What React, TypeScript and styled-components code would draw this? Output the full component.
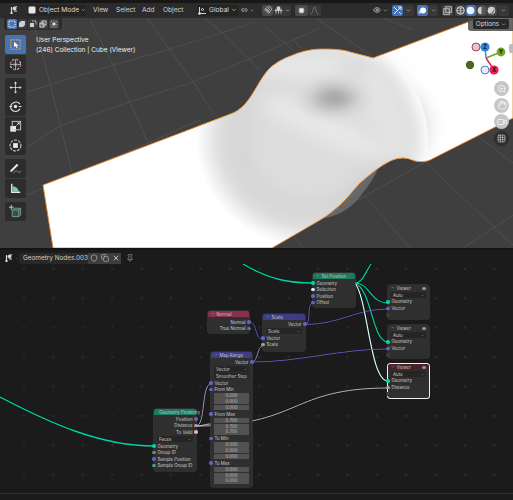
import React from "react";
import styled, { createGlobalStyle } from "styled-components";
import { ChevronDown, Hand, Pin, Shield, Copy, X, Video, ZoomIn, Eye, Magnet, Grid3x3, Link2 } from "lucide-react";

const GlobalStyle = createGlobalStyle`
  html, body { margin: 0; padding: 0; background: #1b1b1b; }
  body { font-family: "Inter", "Liberation Sans", sans-serif; overflow: hidden; }
`;

const Page = styled.div`
  width: 513px;
  height: 500px;
  display: flex;
  flex-direction: column;
  background: #141414;
  overflow: hidden;
`;

/* ---------- 3D viewport ---------- */

const Viewport = styled.section`
  position: relative;
  height: 248px;
  flex: none;
  background: #3f3f3f;
  display: flex;
  flex-direction: column;
  overflow: hidden;
`;

const Scene = styled.svg`
  position: absolute;
  inset: 0;
`;

const TopStrip = styled.div`
  position: relative;
  height: 18px;
  flex: none;
  box-sizing: border-box;
  padding: 4px 4px 2px 8px;
  background: #2b2b2b;
  box-shadow: inset 0 3px 0 #171717;
  display: flex;
  align-items: center;
  color: #d8d8d8;
  font-size: 6.6px;
`;

const Mini = styled.span<{ $w: number; $ml?: number; $bg?: string }>`
  width: ${(p) => p.$w}px;
  height: 11px;
  margin-left: ${(p) => p.$ml ?? 0}px;
  flex: none;
  display: flex;
  align-items: center;
  justify-content: center;
  gap: 2px;
  border-radius: 2px;
  background: ${(p) => p.$bg ?? "transparent"};
  color: #dcdcdc;
  white-space: nowrap;
`;

const MenuItem = styled.span<{ $w: number; $ml?: number }>`
  width: ${(p) => p.$w}px;
  margin-left: ${(p) => p.$ml ?? 0}px;
  flex: none;
  color: #d4d4d4;
`;

const Spring = styled.span`
  flex: 1;
`;

const ToolRow = styled.div`
  position: relative;
  display: flex;
  justify-content: space-between;
  align-items: flex-start;
  height: 13px;
  flex: none;
`;

const SelectModes = styled.div`
  margin-left: 4px;
  width: 58px;
  height: 12px;
  box-sizing: border-box;
  padding: 1px 3px;
  background: #2c2c2c;
  border-radius: 0 0 3px 3px;
  display: flex;
  gap: 1px;
`;

const ModeBtn = styled.span<{ $active?: boolean }>`
  width: 9.5px;
  height: 10px;
  border-radius: 1.5px;
  background: ${(p) => (p.$active ? "#4772b3" : "#3c3c3c")};
  display: flex;
  align-items: center;
  justify-content: center;
`;

const OptionsWrap = styled.div`
  width: 45px;
  height: 13px;
  box-sizing: border-box;
  padding: 1px 4px 1px 5px;
  background: rgba(75, 75, 75, 0.85);
  border-radius: 0 0 0 3px;
`;

const OptionsBtn = styled.div`
  height: 10px;
  border-radius: 2px;
  background: #282828;
  color: #d8d8d8;
  font-size: 6.4px;
  display: flex;
  align-items: center;
  justify-content: center;
  gap: 2px;
`;

const InfoText = styled.div`
  position: relative;
  margin: 4px 0 0 36px;
  color: #f0f0f0;
  font-size: 6.5px;
  line-height: 10px;
`;

const ToolBar = styled.div`
  position: absolute;
  left: 5px;
  top: 35px;
  width: 21px;
  display: flex;
  flex-direction: column;
`;

const ToolGroup = styled.div`
  display: flex;
  flex-direction: column;
  gap: 0.5px;
  margin-bottom: 4px;
`;

const ToolBtn = styled.div<{ $active?: boolean }>`
  height: 19px;
  border-radius: 2px;
  background: ${(p) => (p.$active ? "#4772b3" : "#2c2c2c")};
  display: flex;
  align-items: center;
  justify-content: center;
`;

const SideTab = styled.div`
  position: absolute;
  right: 0;
  top: 44px;
  width: 4px;
  height: 9px;
  background: #bcbcbc;
  border-radius: 2px 0 0 2px;
`;

const NavColumn = styled.div`
  position: absolute;
  right: 4px;
  top: 81px;
  display: flex;
  flex-direction: column;
  gap: 1.5px;
`;

const NavBtn = styled.div<{ $dark?: boolean }>`
  width: 15px;
  height: 15px;
  border-radius: 50%;
  background: ${(p) => (p.$dark ? "#2e2e2e" : "#c6c6c6")};
  color: ${(p) => (p.$dark ? "#d8d8d8" : "#f4f4f4")};
  display: flex;
  align-items: center;
  justify-content: center;
`;

/* ---------- node editor ---------- */

const Editor = styled.section`
  position: relative;
  margin-top: 2px;
  flex: 1;
  display: flex;
  flex-direction: column;
  background-color: #1b1b1b;
  background-image: radial-gradient(circle, #2e2e2e 0.8px, transparent 1px);
  background-size: 29.4px 29.4px;
  background-position: 9.3px 4.3px;
  overflow: hidden;
`;

const EditorHeader = styled.div`
  height: 14px;
  flex: none;
  box-sizing: border-box;
  padding: 2px 0 0 3px;
  display: flex;
  align-items: center;
  font-size: 6.4px;
  color: #d0d0d0;
`;

const NameBox = styled.span`
  width: 69px;
  height: 11px;
  margin-left: 1px;
  box-sizing: border-box;
  padding-left: 4px;
  display: flex;
  align-items: center;
  background: #282828;
  border-radius: 2px 0 0 2px;
  white-space: nowrap;
`;

const NameBtn = styled.span`
  width: 11px;
  height: 11px;
  flex: none;
  background: #3d3d3d;
  display: flex;
  align-items: center;
  justify-content: center;
  color: #bdbdbd;
`;

const Wires = styled.svg`
  position: absolute;
  left: 0;
  top: -250px;
  width: 513px;
  height: 500px;
  pointer-events: none;
`;

const Footer = styled.div`
  position: absolute;
  left: 0;
  right: 0;
  bottom: 0;
  height: 6px;
  background: #1b1b1b;
  border-top: 1.5px solid #2f2f2f;
`;

const Node = styled.div<{ $x: number; $y: number; $w: number; $h: number; $active?: boolean }>`
  position: absolute;
  left: ${(p) => p.$x}px;
  top: ${(p) => p.$y - 250}px;
  width: ${(p) => p.$w}px;
  height: ${(p) => p.$h}px;
  box-sizing: border-box;
  background: #2f2f2f;
  border-radius: 2.5px;
  box-shadow: ${(p) => (p.$active ? "0 0 0 1px #f2f2f2" : "0 0 0 0.6px #404040")};
  color: #cdcdcd;
  font-size: 4.4px;
  white-space: nowrap;
`;

const NodeHead = styled.div<{ $bg: string }>`
  height: 6px;
  box-sizing: border-box;
  padding: 0 3px;
  background: ${(p) => p.$bg};
  border-radius: 2.5px 2.5px 0 0;
  display: flex;
  align-items: center;
  gap: 2px;
  color: #c6c6c6;
  margin-bottom: 0.75px;
`;

const EyeDot = styled.span`
  margin-left: auto;
  width: 4px;
  height: 3px;
  border-radius: 50%;
  background: #9a9a9a;
`;

const Row = styled.div<{ $right?: boolean }>`
  position: relative;
  height: 6.5px;
  padding: 0 3.5px;
  display: flex;
  align-items: center;
  justify-content: ${(p) => (p.$right ? "flex-end" : "flex-start")};
`;

const Gap = styled.div<{ $h: number }>`
  height: ${(p) => p.$h}px;
`;

const Socket = styled.i<{ $c: string; $right?: boolean }>`
  position: absolute;
  top: 1.5px;
  ${(p) => (p.$right ? "right: -1.75px;" : "left: -1.75px;")}
  width: 3.5px;
  height: 3.5px;
  border-radius: 50%;
  background: ${(p) => p.$c};
`;

const Drop = styled.div<{ $mt?: number }>`
  height: 6px;
  margin: ${(p) => p.$mt ?? 1}px 3px 0.5px;
  box-sizing: border-box;
  padding: 0 2px;
  background: #252525;
  border-radius: 1.5px;
  display: flex;
  align-items: center;
  justify-content: space-between;
`;

const Fields = styled.div`
  height: 18px;
  margin: 0 3px;
  display: flex;
  flex-direction: column;
  justify-content: center;
  gap: 0.4px;
`;

const Field = styled.div`
  height: 5.4px;
  line-height: 5.4px;
  background: #525252;
  text-align: center;
  color: #c8c8c8;
`;

/* ---------- little drawings ---------- */

const Chev = ({ s = 6 }: { s?: number }) => <ChevronDown size={s} strokeWidth={2.4} />;

const IconSvg = styled.svg`
  display: block;
  flex: none;
`;

type P = { s?: number };

const CubeIcon = ({ s = 10 }: P) => (
  <IconSvg width={s} height={s} viewBox="0 0 10 10">
    <rect x="1.5" y="1.5" width="7" height="7" rx="1.5" fill="#e8e8e8" stroke="#8a8a8a" />
  </IconSvg>
);

const EditorIcon = ({ s = 11 }: P) => (
  <IconSvg width={s} height={s} viewBox="0 0 11 11" fill="none" stroke="#d8d8d8">
    <path d="M2 8h3M3.5 2v7M6 3l3-1.5M6 6h3" strokeWidth="1.2" />
    <circle cx="6.5" cy="3.5" r="1.5" fill="#d8d8d8" />
  </IconSvg>
);

const GlobalIcon = () => (
  <IconSvg width={9} height={9} viewBox="0 0 9 9" fill="none" stroke="#d8d8d8">
    <path d="M1.5 1v6.5H8" strokeWidth="1" />
    <circle cx="1.5" cy="7.5" r="1" fill="#d8d8d8" />
    <circle cx="4.5" cy="3.5" r="1" />
  </IconSvg>
);

const SnapGrid = () => (
  <IconSvg width={9} height={9} viewBox="0 0 9 9" fill="none" stroke="#d8d8d8" strokeWidth="0.8">
    <path d="M.5 4.5h8M2 2.5v5M4.5 2.5v5M7 2.5v5" />
    <rect x="3.2" y="1" width="2.6" height="2.6" fill="#d8d8d8" />
  </IconSvg>
);

const Sphere = ({ kind }: { kind: "wire" | "solid" | "mat" | "rend" }) => (
  <IconSvg width={9} height={9} viewBox="0 0 9 9">
    <circle cx="4.5" cy="4.5" r="3.8" fill={kind === "solid" ? "#eef2fb" : "#d0d0d0"} stroke={kind === "wire" ? "#d8d8d8" : "none"} fillOpacity={kind === "wire" ? 0 : 1} />
    {kind === "wire" && <path d="M.7 4.5h7.6M4.5.7v7.6M2 2c1.500 1 3.500 1 5 0M2 7c1.500-1 3.500-1 5 0" stroke="#d8d8d8" strokeWidth=".6" fill="none" />}
    {kind === "mat" && <path d="M4.500.7a3.800 3.800 0 0 1 0 7.600z" fill="#555" />}
    {kind === "rend" && <path d="M7 2a3.800 3.800 0 0 1-5 5.300A5 5 0 0 0 7 2z" fill="#555" />}
  </IconSvg>
);

const ModeGlyph = ({ i }: { i: number }) => (
  <IconSvg width={8} height={8} viewBox="0 0 8 8">
    {i === 0 && <rect x="1" y="1" width="6" height="6" fill="none" stroke="#fff" strokeWidth="1" strokeDasharray="1 .8" />}
    {i === 1 && <path d="M1 7V3l2-2h4v4l-2 2z" fill="#cfcfcf" />}
    {i === 2 && <g><rect x="1" y="3" width="4" height="4" fill="#cfcfcf" /><path d="M3 1h4v4" fill="none" stroke="#cfcfcf" strokeDasharray="1 .6" /></g>}
    {i === 3 && <g><rect x="1" y="3" width="4" height="4" fill="none" stroke="#e0e0e0" /><rect x="3" y="1" width="4" height="4" fill="none" stroke="#cfcfcf" /></g>}
    {i === 4 && <g><rect x="2.500" y="2.500" width="3" height="3" fill="#e0e0e0" /><rect x="1" y="1" width="6" height="6" fill="none" stroke="#b0b0b0" strokeDasharray="1 .8" /></g>}
  </IconSvg>
);

const toolIcons: Record<string, React.ReactNode> = {
  select: (
    <g>
      <rect x="3" y="3" width="10" height="10" fill="none" stroke="#f0a040" strokeWidth="1.2" strokeDasharray="1.600 1" />
      <path d="M6.500 5v6l1.500-1.300L9.500 12l.8-.5-1-2 2-.2z" fill="#fff" />
    </g>
  ),
  cursor: (
    <g fill="none">
      <circle cx="8" cy="8" r="5.500" stroke="#e0e0e0" strokeWidth="1.200" strokeDasharray="2.500 1.800" />
      <circle cx="8" cy="8" r="5.500" stroke="#d84a5a" strokeWidth="1.200" strokeDasharray="2.500 6" />
      <path d="M8 2.500v11M2.500 8h11" stroke="#cfcfcf" strokeWidth=".8" />
      <circle cx="8" cy="8" r="2" stroke="#888" strokeWidth=".8" />
    </g>
  ),
  move: (
    <path d="M8 1.500l1.700 2.200H6.300zM8 14.500l1.700-2.200H6.300zM1.500 8l2.200-1.700v3.400zM14.500 8l-2.200-1.700v3.400zM7.600 3.500h.8v9h-.8zM3.500 7.600h9v.8h-9z" fill="#e6e6e6" />
  ),
  rotate: (
    <g fill="none" stroke="#dedede">
      <path d="M3.200 10.500A5.500 5.500 0 0 1 12.800 5.500M12.800 10.500a5.500 5.500 0 0 1-9.600 0" strokeWidth="1.200" />
      <circle cx="8" cy="8" r="1.800" fill="#e8e8e8" stroke="none" />
      <path d="M1.500 8h3M11.500 8h3" strokeWidth="1.200" />
    </g>
  ),
  scale: (
    <g>
      <rect x="2.500" y="7.500" width="6" height="6" fill="#efefef" />
      <rect x="4.500" y="2.500" width="9" height="9" fill="none" stroke="#c8c8c8" strokeWidth="1" />
      <path d="M9 7l3-3M10 4h2v2" fill="none" stroke="#e8e8e8" strokeWidth=".9" />
    </g>
  ),
  transform: (
    <g fill="none">
      <circle cx="8" cy="8" r="5.800" stroke="#d0d0d0" strokeWidth="1.100" strokeDasharray="3 1.200" />
      <rect x="5.500" y="5.500" width="5" height="5" fill="#ececec" />
    </g>
  ),
  annotate: (
    <g fill="none">
      <path d="M2.500 12l7-7 1.500 1.500-7 7H2.500z" fill="#ececec" transform="translate(0 -2)" />
      <path d="M6 13c2-3 3-3 4-2s2 2 4 0" stroke="#6fae97" strokeWidth=".9" />
    </g>
  ),
  measure: (
    <g>
      <path d="M4 3v9h9" fill="none" stroke="#e8e8e8" strokeWidth="1.500" />
      <path d="M5 5.500a7 7 0 0 1 6.500 6H5z" fill="#7fc7ab" />
    </g>
  ),
  add: (
    <g fill="none">
      <path d="M4.500 6.500l2-2h7v7l-2 2h-7z" fill="#34524a" stroke="#7fa896" strokeWidth=".9" />
      <path d="M4.500 6.500h7v7M11.500 6.500l2-2" stroke="#7fa896" strokeWidth=".9" />
      <path d="M3.500 1v5M1 3.500h5" stroke="#7ee0bc" strokeWidth="1.100" />
    </g>
  ),
};

const ToolIcon = ({ name }: { name: string }) => (
  <IconSvg width={15} height={15} viewBox="0 0 16 16">
    {toolIcons[name]}
  </IconSvg>
);

/* ---------- viewport scene ---------- */

const PLANE =
  "M43 185 L233 113 C240 110 247 103 253 93 C258 85 263 75 270 68 C278 61 285 58 293 55 C305 50 315 49 323 49 C335 49 345 50 350 52 C358 54 366 56 373 58 L513 5 L513 118 L430 160 C426 162 420 162 415 161 C410 159 407 158 403 158 C395 158 390 161 383 165 C375 170 367 177 360 183 C353 190 347 199 340 205 C334 210 327 216 320 220 L272 248 L53 248 Z";

const DOME_TOP =
  "M250 90 C262 66 295 50 323 49 C345 50 360 54 373 58 C396 75 412 112 418 158 L403 158 C380 165 360 185 340 205 C300 222 262 205 244 170 C232 140 238 110 250 90 Z";

const gridLines = [
  [43, 57, 50, 83], [50, 83, 72, 173], [32, 18, 43, 57],
  [90, 20, 112, 63], [112, 63, 130, 102], [130, 102, 148, 143],
  [147, 18, 170, 50], [170, 50, 193, 82], [193, 82, 213, 113],
  [230, 40, 260, 70], [205, 18, 230, 40],
  [266, 27, 293, 50], [293, 40, 303, 50],
  [316, 18, 373, 57], [383, 18, 413, 30],
  [27, 92, 113, 65], [113, 65, 167, 50], [167, 50, 256, 22],
  [27, 147, 60, 126], [60, 126, 130, 102], [130, 102, 193, 82], [193, 82, 263, 53], [263, 53, 320, 28],
  [27, 195, 148, 143], [148, 143, 200, 120],
  [365, 196, 410, 248], [365, 196, 425, 162], [328, 216, 365, 196],
  [425, 162, 513, 245], [479, 137, 513, 163], [463, 248, 513, 215], [293, 235, 303, 248],
];

const SceneArt = () => (
  <Scene width={513} height={248} viewBox="0 0 513 248">
    <defs>
      <clipPath id="planeClip"><path d={PLANE} /></clipPath>
      <radialGradient id="halo">
        <stop offset="0" stopColor="#cccccc" />
        <stop offset="0.55" stopColor="#cacaca" />
        <stop offset="0.8" stopColor="#dedede" />
        <stop offset="1" stopColor="#ffffff" />
      </radialGradient>
      <radialGradient id="haloRight">
        <stop offset="0" stopColor="#dadada" />
        <stop offset="0.5" stopColor="#dadada" />
        <stop offset="1" stopColor="#ffffff" stopOpacity="0" />
      </radialGradient>
      <radialGradient id="pit">
        <stop offset="0" stopColor="#a9a9a9" />
        <stop offset="0.2" stopColor="#b0b0b0" />
        <stop offset="0.55" stopColor="#d0d0d0" />
        <stop offset="1" stopColor="#e0e0e0" stopOpacity="0" />
      </radialGradient>
      <linearGradient id="blob" x1="0" x2="1" y1="0" y2="1">
        <stop offset="0" stopColor="#7a7a7a" />
        <stop offset="1" stopColor="#585858" />
      </linearGradient>
      <filter id="soft" x="-40%" y="-40%" width="180%" height="180%"><feGaussianBlur stdDeviation="14" /></filter>
      <filter id="softer" x="-40%" y="-40%" width="180%" height="180%"><feGaussianBlur stdDeviation="8" /></filter>
    </defs>
    {gridLines.map(([a, b, c, d], i) => (
      <line key={i} x1={a} y1={b} x2={c} y2={d} stroke="#555555" strokeWidth="0.7" />
    ))}
    <path d="M324 218 C340 216 354 206 362 194 C370 184 377 173 378 168 L350 190 Z" fill="url(#blob)" />
    <path d={PLANE} fill="#ffffff" />
    <g clipPath="url(#planeClip)">
      <ellipse cx="385" cy="125" rx="64" ry="58" fill="url(#haloRight)" />
      <ellipse cx="312" cy="140" rx="116" ry="108" fill="url(#halo)" />
      <path d={DOME_TOP} fill="#dddddd" filter="url(#soft)" />
      <path d="M372 62 C392 78 406 112 410 156 L392 160 L358 90 Z" fill="#e4e4e4" filter="url(#softer)" />
      <ellipse cx="325" cy="128" rx="70" ry="12" transform="rotate(24 325 128)" fill="#e9e9e9" filter="url(#softer)" />
      <ellipse cx="300" cy="66" rx="46" ry="12" fill="#e8e8e8" filter="url(#softer)" />
      <ellipse cx="334" cy="98" rx="44" ry="27" fill="url(#pit)" />
    </g>
    <path d={PLANE} fill="none" stroke="#e8872a" strokeWidth="0.9" />
  </Scene>
);

const Gizmo = () => (
  <Scene width={513} height={248} viewBox="0 0 513 248">
    <line x1="486" y1="58" x2="485" y2="47" stroke="#3b8fe8" strokeWidth="1.500" />
    <line x1="486" y1="58" x2="501" y2="52" stroke="#6ea31c" strokeWidth="1.500" />
    <line x1="486" y1="58" x2="494" y2="70" stroke="#e8234f" strokeWidth="1.500" />
    <circle cx="476" cy="47" r="4" fill="#e0c8cc" stroke="#b83a4e" strokeWidth="1" />
    <circle cx="470" cy="65" r="4.200" fill="#4d661f" />
    <circle cx="485" cy="70" r="4" fill="#e6ecf6" stroke="#4a80c8" strokeWidth="1" />
    <circle cx="485" cy="47" r="4.600" fill="#2e86e8" />
    <circle cx="501" cy="52" r="4.400" fill="#74a31f" />
    <circle cx="494" cy="70" r="4.600" fill="#e8234f" />
    <g fontSize="5.500" fontWeight="700" fontFamily="Inter, sans-serif" textAnchor="middle" fill="#111">
      <text x="485" y="49">Z</text>
      <text x="501" y="54">Y</text>
      <text x="494" y="72">X</text>
    </g>
  </Scene>
);

/* ---------- node data ---------- */

type NodeRow =
  | { t: "out" | "in"; label: string; c?: string }
  | { t: "drop"; label: string; mt?: number }
  | { t: "gap"; h: number }
  | { t: "fields"; value: string };

type NodeDef = {
  title: string; x: number; y: number; w: number; h: number; head: string;
  active?: boolean; eye?: boolean; rows: NodeRow[];
};

const GEO = "#00d6a3";
const VEC = "#6363c7";
const VAL = "#a1a1a1";
const INT = "#4f9a7d";
const BOOL = "#d2b4c8";

const viewer = (y: number, h: number, second: string, c: string, active?: boolean): NodeDef => ({
  title: "Viewer", x: 388, y, w: 41, h, head: active ? "#4a2029" : "#303030", active, eye: true,
  rows: [
    { t: "drop", label: "Auto", mt: 1 },
    { t: "in", label: "Geometry", c: GEO },
    { t: "in", label: second, c },
    { t: "in", label: "", c: "#3a3a3a" },
  ],
});

const nodes: NodeDef[] = [
  {
    title: "Set Position", x: 313, y: 273, w: 42, h: 34, head: "#1c7a60",
    rows: [
      { t: "in", label: "Geometry", c: GEO },
      { t: "in", label: "Selection", c: "#e6e6e6" },
      { t: "in", label: "Position", c: VEC },
      { t: "in", label: "Offset", c: VEC },
    ],
  },
  {
    title: "Normal", x: 208, y: 311, w: 41, h: 22, head: "#8a3049",
    rows: [
      { t: "gap", h: 1 },
      { t: "out", label: "Normal", c: VEC },
      { t: "out", label: "True Normal", c: VEC },
    ],
  },
  {
    title: "Scale", x: 263, y: 314, w: 42, h: 37, head: "#3d3d85",
    rows: [
      { t: "out", label: "Vector", c: VEC },
      { t: "drop", label: "Scale", mt: 1 },
      { t: "in", label: "Vector", c: VEC },
      { t: "in", label: "Scale", c: VAL },
    ],
  },
  {
    title: "Map Range", x: 211, y: 352, w: 41, h: 135, head: "#3d3d85",
    rows: [
      { t: "out", label: "Vector", c: VEC },
      { t: "drop", label: "Vector", mt: 1 },
      { t: "drop", label: "Smoother Step", mt: 1 },
      { t: "in", label: "Vector", c: VEC },
      { t: "in", label: "From Min", c: VEC },
      { t: "fields", value: "0.000" },
      { t: "in", label: "From Max", c: VEC },
      { t: "fields", value: "0.700" },
      { t: "in", label: "To Min", c: VEC },
      { t: "fields", value: "0.000" },
      { t: "in", label: "To Max", c: VEC },
      { t: "fields", value: "0.000" },
    ],
  },
  {
    title: "Geometry Proximity", x: 154, y: 409, w: 42, h: 62, head: "#1c7a60",
    rows: [
      { t: "out", label: "Position", c: VEC },
      { t: "out", label: "Distance", c: VAL },
      { t: "out", label: "To Valid", c: BOOL },
      { t: "drop", label: "Faces", mt: 1 },
      { t: "in", label: "Geometry", c: GEO },
      { t: "in", label: "Group ID", c: INT },
      { t: "in", label: "Sample Position", c: VEC },
      { t: "in", label: "Sample Group ID", c: INT },
    ],
  },
  viewer(285, 34, "Vector", VEC),
  viewer(325, 33, "Vector", VEC),
  viewer(364, 34, "Distance", VAL, true),
];

const wires: { d: string; c: string; w?: number }[] = [
  { d: "M0 397 C50 423 100 446 154 446", c: GEO, w: 1.4 },
  { d: "M243 264 C270 280 290 283 313 283", c: GEO, w: 1.4 },
  { d: "M355 283 C362 283 364 275 371 264", c: GEO, w: 1.2 },
  { d: "M355 283 C370 283 370 303 388 303", c: GEO, w: 1.2 },
  { d: "M355 283 C372 290 372 342 388 342", c: GEO, w: 1.2 },
  { d: "M355 283 C368 300 370 381 388 381", c: "#d8fff2", w: 1.2 },
  { d: "M249 322 C258 322 254 339.500 263 339.500", c: VEC },
  { d: "M305 324.500 C312 324.500 306 303 313 303", c: VEC },
  { d: "M305 324.500 C340 324.500 355 309 388 309", c: VEC },
  { d: "M252 362 C300 362 340 349 388 349", c: VEC },
  { d: "M252 362 C258 362 257 346 263 346", c: "#9a9ab8" },
  { d: "M196 426 C206 426 201 384 211 384", c: "#a8a8d8" },
  { d: "M196 426 C300 426 290 388 388 388", c: "#c9c9c9" },
  { d: "M196 426 C204 426 204 424 211 424", c: "#e6e6e6" },
];

const NodeCard = ({ n }: { n: NodeDef }) => (
  <Node $x={n.x} $y={n.y} $w={n.w} $h={n.h} $active={n.active}>
    <NodeHead $bg={n.head}>
      <Chev s={3.5} />
      {n.title}
      {n.eye && <EyeDot />}
    </NodeHead>
    {n.rows.map((r, i) => {
      if (r.t === "gap") return <Gap key={i} $h={r.h} />;
      if (r.t === "drop")
        return (
          <Drop key={i} $mt={r.mt}>
            {r.label}
            <Chev s={3} />
          </Drop>
        );
      if (r.t === "fields")
        return (
          <Fields key={i}>
            <Field>{r.value}</Field>
            <Field>{r.value}</Field>
            <Field>{r.value}</Field>
          </Fields>
        );
      return (
        <Row key={i} $right={r.t === "out"}>
          {r.label}
          <Socket $c={r.c ?? VAL} $right={r.t === "out"} />
        </Row>
      );
    })}
  </Node>
);

const tools = [
  [["select", true], ["cursor", false]],
  [["move", false], ["rotate", false], ["scale", false], ["transform", false]],
  [["annotate", false], ["measure", false]],
  [["add", false]],
] as [string, boolean][][];

export default function App() {
  return (
    <Page>
      <GlobalStyle />
      <Viewport>
        <SceneArt />
        <TopStrip>
          <Mini $w={14}><EditorIcon /><Chev s={5} /></Mini>
          <Mini $w={59} $ml={5} $bg="#242424"><CubeIcon />Object Mode<Chev /></Mini>
          <MenuItem $w={23} $ml={7}>View</MenuItem>
          <MenuItem $w={26}>Select</MenuItem>
          <MenuItem $w={21}>Add</MenuItem>
          <MenuItem $w={34}>Object</MenuItem>
          <Mini $w={41} $bg="#242424"><GlobalIcon />Global<Chev /></Mini>
          <Mini $w={13} $ml={3}><Link2 size={8} /><Chev s={5} /></Mini>
          <Mini $w={11} $ml={8} $bg="#4a4a4a"><Magnet size={8} /></Mini>
          <Mini $w={18} $bg="#383838"><SnapGrid /><Chev s={5} /></Mini>
          <Mini $w={13} $ml={4} $bg="#4a4a4a"><CubeIcon s={7} /></Mini>
          <Mini $w={13} $bg="#383838"><IconSvg width={9} height={9} viewBox="0 0 9 9"><path d="M.5 8C3 8 3 1 4.500 1S6 8 8.500 8" fill="none" stroke="#707070" /></IconSvg></Mini>
          <Spring />
          <Mini $w={20}><Eye size={8} /><Chev s={5} /></Mini>
          <Mini $w={11} $ml={2} $bg="#4772b3"><IconSvg width={9} height={9} viewBox="0 0 9 9"><path d="M1 8l7-7M1 1l3 3M8 8L6 6M5 1h3v3" stroke="#e8f0ff" fill="none" /></IconSvg></Mini>
          <Mini $w={11} $bg="#383838"><Chev s={5} /></Mini>
          <Mini $w={11} $ml={3} $bg="#4772b3"><IconSvg width={9} height={9} viewBox="0 0 9 9"><circle cx="5" cy="4.500" r="3" fill="#fff" /><circle cx="2" cy="6" r="1.500" fill="#c8d8f0" /></IconSvg></Mini>
          <Mini $w={10} $bg="#383838"><Chev s={5} /></Mini>
          <Mini $w={11} $ml={4} $bg="#454545"><IconSvg width={9} height={9} viewBox="0 0 9 9" fill="none" stroke="#c0c0c0"><rect x=".8" y="2.800" width="5.500" height="5.500" /><rect x="2.800" y=".8" width="5.500" height="5.500" /></IconSvg></Mini>
          <Mini $w={10.500} $ml={2} $bg="#454545"><Sphere kind="wire" /></Mini>
          <Mini $w={10.500} $bg="#4772b3"><Sphere kind="solid" /></Mini>
          <Mini $w={10.500} $bg="#454545"><Sphere kind="mat" /></Mini>
          <Mini $w={10.500} $bg="#454545"><Sphere kind="rend" /></Mini>
          <Mini $w={11} $ml={1} $bg="#383838"><Chev s={5} /></Mini>
        </TopStrip>
        <ToolRow>
          <SelectModes>
            {[0, 1, 2, 3, 4].map((i) => (
              <ModeBtn key={i} $active={i === 0}><ModeGlyph i={i} /></ModeBtn>
            ))}
          </SelectModes>
          <OptionsWrap><OptionsBtn>Options<Chev s={5} /></OptionsBtn></OptionsWrap>
        </ToolRow>
        <InfoText>
          User Perspective
          <br />
          (246) Collection | Cube (Viewer)
        </InfoText>
        <ToolBar>
          {tools.map((group, g) => (
            <ToolGroup key={g}>
              {group.map(([name, active]) => (
                <ToolBtn key={name} $active={active}><ToolIcon name={name} /></ToolBtn>
              ))}
            </ToolGroup>
          ))}
        </ToolBar>
        <Gizmo />
        <SideTab />
        <NavColumn>
          <NavBtn><ZoomIn size={10} strokeWidth={2} /></NavBtn>
          <NavBtn><Hand size={10} strokeWidth={2} /></NavBtn>
          <NavBtn><Video size={10} strokeWidth={2} /></NavBtn>
          <NavBtn $dark><Grid3x3 size={9} strokeWidth={1.500} /></NavBtn>
        </NavColumn>
      </Viewport>
      <Editor>
        <EditorHeader>
          <Mini $w={15}><EditorIcon /><Chev s={5} /></Mini>
          <NameBox>Geometry Nodes.003</NameBox>
          <NameBtn><Shield size={8} /></NameBtn>
          <NameBtn><Copy size={8} /></NameBtn>
          <NameBtn><X size={8} strokeWidth={3} /></NameBtn>
          <Mini $w={12} $ml={3}><Pin size={8} color="#9a9a9a" /></Mini>
        </EditorHeader>
        <Wires viewBox="0 0 513 500">
          {wires.map((w, i) => (
            <path key={"o" + i} d={w.d} fill="none" stroke="#000" strokeOpacity="0.5" strokeWidth={(w.w ?? 0.9) + 0.8} />
          ))}
          {wires.map((w, i) => (
            <path key={i} d={w.d} fill="none" stroke={w.c} strokeWidth={w.w ?? 0.9} />
          ))}
        </Wires>
        {nodes.map((n) => (
          <NodeCard key={n.title + n.y} n={n} />
        ))}
        <Footer />
      </Editor>
    </Page>
  );
}
